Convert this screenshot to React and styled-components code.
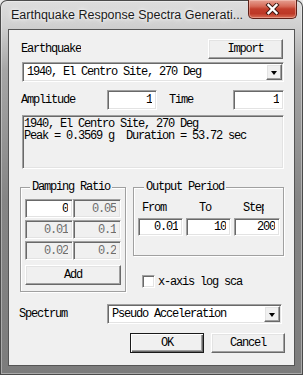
import React from 'react';
import styled, { createGlobalStyle, css } from 'styled-components';

const GlobalStyle = createGlobalStyle`
  html, body {
    margin: 0;
    padding: 0;
    background: #e9e9e9;
  }
  body {
    width: 303px;
    height: 375px;
    overflow: hidden;
  }
`;

const mono = `"Liberation Mono", "DejaVu Sans Mono", monospace`;

// classic 3D edges
const sunken = css`
  box-sizing: border-box;
  border: 1px solid;
  border-color: #a0a0a0 #fff #fff #a0a0a0;
  box-shadow: inset 1px 1px 0 #696969, inset -1px -1px 0 #e3e3e3;
`;

const raised = css`
  box-sizing: border-box;
  border: 1px solid;
  border-color: #fff #696969 #696969 #fff;
  box-shadow: inset -1px -1px 0 #a0a0a0, inset 1px 1px 0 #e3e3e3;
  background: #f0f0f0;
`;

const Window = styled.div`
  box-sizing: border-box;
  width: 303px;
  height: 375px;
  padding: 0 8px 9px;
  display: flex;
  flex-direction: column;
  border-radius: 7px 7px 0 0;
  background: linear-gradient(#dedede 0, #d0d0d0 26px, #a6a6a6 70px, #858585 200px, #7c7c7c 100%);
  box-shadow: inset 0 0 0 1px #4a4a4a, inset 0 0 0 2px rgba(255, 255, 255, 0.35);
`;

const TitleBar = styled.div`
  height: 29px;
  margin: 0 -8px;
  padding-left: 11px;
  display: flex;
  align-items: flex-start;
  justify-content: space-between;
`;

const Title = styled.div`
  padding-top: 7px;
  font: 12.5px/16px "Liberation Sans", Arial, sans-serif;
  color: #1a1a1a;
  text-shadow: 0 0 6px #fff, 0 0 3px #fff;
  white-space: nowrap;
`;

const CloseButton = styled.div`
  box-sizing: border-box;
  width: 49px;
  height: 19px;
  margin-right: 6px;
  display: flex;
  align-items: center;
  justify-content: center;
  border: 1px solid #5e2018;
  border-top: none;
  border-radius: 0 0 5px 5px;
  background: linear-gradient(#e6a092 0, #d66a58 35%, #c23e2c 50%, #bd3826 75%, #d86e56 100%);
  box-shadow: inset 0 0 0 1px rgba(255, 220, 210, 0.4);
`;

const Client = styled.div`
  flex: 1;
  display: flex;
  flex-direction: column;
  padding: 9px 10px 0 11px;
  background: #f0f0f0;
  border: 1px solid #555;
  font: 12px/12px ${mono};
  letter-spacing: -1.2px;
  color: #000;
`;

const Row = styled.div`
  display: flex;
  align-items: center;
  height: 20px;
  margin-top: ${(p) => p.$top || 0}px;
  justify-content: ${(p) => p.$justify || 'flex-start'};
  gap: ${(p) => p.$gap || 0}px;
`;

const Label = styled.span`
  box-sizing: border-box;
  width: ${(p) => (p.$width ? `${p.$width}px` : 'auto')};
  padding-left: ${(p) => p.$pad || 0}px;
  margin-left: ${(p) => p.$shift || 0}px;
  white-space: nowrap;
  overflow: hidden;
`;

const Button = styled.button`
  ${raised};
  width: ${(p) => p.$width || 74}px;
  height: 20px;
  padding: 0;
  margin: 0;
  font: inherit;
  letter-spacing: inherit;
  color: #000;
  ${(p) => p.$default && css`
    border: 1px solid #1a1a1a;
    box-shadow: inset 1px 1px 0 #fff, inset -1px -1px 0 #696969, inset -2px -2px 0 #a0a0a0;
  `}
`;

const Combo = styled.div`
  ${sunken};
  display: flex;
  align-items: center;
  height: 20px;
  width: ${(p) => (p.$width ? `${p.$width}px` : 'auto')};
  margin-left: ${(p) => p.$left || 0}px;
  padding: 2px 1px 2px 4px;
  background: #fff;
`;

const ComboText = styled.span`
  flex: 1;
  white-space: nowrap;
`;

const ComboArrow = styled.span`
  ${raised};
  width: 16px;
  height: 16px;
  display: flex;
  align-items: center;
  justify-content: center;

  &::after {
    content: '';
    border-left: 3.5px solid transparent;
    border-right: 3.5px solid transparent;
    border-top: 4px solid #000;
    margin-top: 1px;
  }
`;

const Field = styled.input`
  ${sunken};
  width: ${(p) => (p.$width ? `${p.$width}px` : '100%')};
  height: ${(p) => p.$height || 20}px;
  margin: 0;
  padding: 0 4px 0 2px;
  font: inherit;
  letter-spacing: inherit;
  text-align: right;
  color: #000;
  background: #fff;
  outline: none;

  &:disabled {
    color: #6d6d6d;
    background: #f0f0f0;
  }
`;

const Memo = styled.textarea`
  ${sunken};
  display: block;
  height: 54px;
  margin: 5px 0 0 2px;
  padding: 2px 0 0 1px;
  font: inherit;
  line-height: 12px;
  letter-spacing: inherit;
  color: #000;
  background: #f0f0f0;
  resize: none;
  overflow: hidden;
  outline: none;
`;

const GroupsRow = styled.div`
  display: flex;
  align-items: flex-start;
  gap: 7px;
  margin-top: 12px;
`;

const Group = styled.fieldset`
  box-sizing: border-box;
  width: ${(p) => p.$width}px;
  min-width: 0;
  margin: 0;
  padding: ${(p) => p.$padding};
  border: 1px solid #a0a0a0;
  box-shadow: inset 1px 1px 0 #fff, 1px 1px 0 #fff;
`;

const Legend = styled.legend`
  margin-left: ${(p) => p.$left || 5}px;
  padding: 0 2px;
  line-height: 12px;
  background: #f0f0f0;
`;

const CellGrid = styled.div`
  display: grid;
  grid-template-columns: 48px 48px;
  grid-auto-rows: 19px;
  row-gap: 2px;
`;

const PeriodGrid = styled.div`
  display: grid;
  grid-template-columns: 45px 45px 46px;
  grid-template-rows: 12px 18px;
  column-gap: 3px;
  row-gap: 4px;
`;

const SideColumn = styled.div`
  display: flex;
  flex-direction: column;
`;

const CheckRow = styled.label`
  display: flex;
  align-items: center;
  gap: 3px;
  margin: 19px 0 0 9px;
`;

const CheckBox = styled.span`
  ${sunken};
  width: 13px;
  height: 13px;
  background: #fff;
`;

const damping = [
  { v: '0', on: true },
  { v: '0.05' },
  { v: '0.01' },
  { v: '0.1' },
  { v: '0.02' },
  { v: '0.2' },
];

const periods = [
  { label: 'From', pad: 4, value: '0.01' },
  { label: 'To', pad: 13, value: '10' },
  { label: 'Step', pad: 9, value: '200', clip: 21 },
];

export default function App() {
  return (
    <>
      <GlobalStyle />
      <Window>
        <TitleBar>
          <Title>Earthquake Response Spectra Generati...</Title>
          <CloseButton>
            <svg width="15" height="12" viewBox="0 0 15 12">
              <path d="M3.5 2 L11.5 10 M11.5 2 L3.5 10" stroke="#3a1510" strokeWidth="4.2" strokeLinecap="square" />
              <path d="M3.5 2 L11.5 10 M11.5 2 L3.5 10" stroke="#fff" strokeWidth="2.4" strokeLinecap="square" />
            </svg>
          </CloseButton>
        </TitleBar>

        <Client>
          <Row $justify="space-between">
            <Label $pad={1}>Earthquake</Label>
            <Button $width={75} style={{ marginRight: 1 }}>Import</Button>
          </Row>

          <Row $top={3}>
            <Combo $left={2} style={{ flex: 1 }}>
              <ComboText>1940, El Centro Site, 270 Deg</ComboText>
              <ComboArrow />
            </Combo>
          </Row>

          <Row $top={8}>
            <Label $width={87} $pad={1}>Amplitude</Label>
            <Field $width={50} defaultValue="1" readOnly />
            <Label $width={76} $pad={12}>Time</Label>
            <Field $width={51} defaultValue="1" readOnly />
          </Row>

          <Memo
            readOnly
            defaultValue={'1940, El Centro Site, 270 Deg\nPeak = 0.3569 g  Duration = 53.72 sec'}
          />

          <GroupsRow>
            <Group $width={106} $padding="6px 4px 6px 4px">
              <Legend>Damping Ratio</Legend>
              <CellGrid>
                {damping.map((d, i) => (
                  <Field key={i} $height={19} defaultValue={d.v} disabled={!d.on} readOnly />
                ))}
              </CellGrid>
              <Button style={{ width: '100%', marginTop: 5 }}>Add</Button>
            </Group>

            <SideColumn>
              <Group $width={151} $padding="9px 3px 19px 4px">
                <Legend $left={6}>Output Period</Legend>
                <PeriodGrid>
                  {periods.map((p) => (
                    <Label key={p.label} $pad={p.pad} style={p.clip ? { width: p.pad + p.clip } : null}>
                      {p.label}
                    </Label>
                  ))}
                  {periods.map((p) => (
                    <Field key={p.label} $height={18} defaultValue={p.value} readOnly />
                  ))}
                </PeriodGrid>
              </Group>
              <CheckRow>
                <CheckBox />
                <span>x-axis log sca</span>
              </CheckRow>
            </SideColumn>
          </GroupsRow>

          <Row $top={12}>
            <Label $width={88} $shift={-1}>Spectrum</Label>
            <Combo $width={175}>
              <ComboText>Pseudo Acceleration</ComboText>
              <ComboArrow />
            </Combo>
          </Row>

          <Row $top={9} $justify="flex-end" $gap={7} style={{ marginRight: -1 }}>
            <Button $default>OK</Button>
            <Button>Cancel</Button>
          </Row>
        </Client>
      </Window>
    </>
  );
}
